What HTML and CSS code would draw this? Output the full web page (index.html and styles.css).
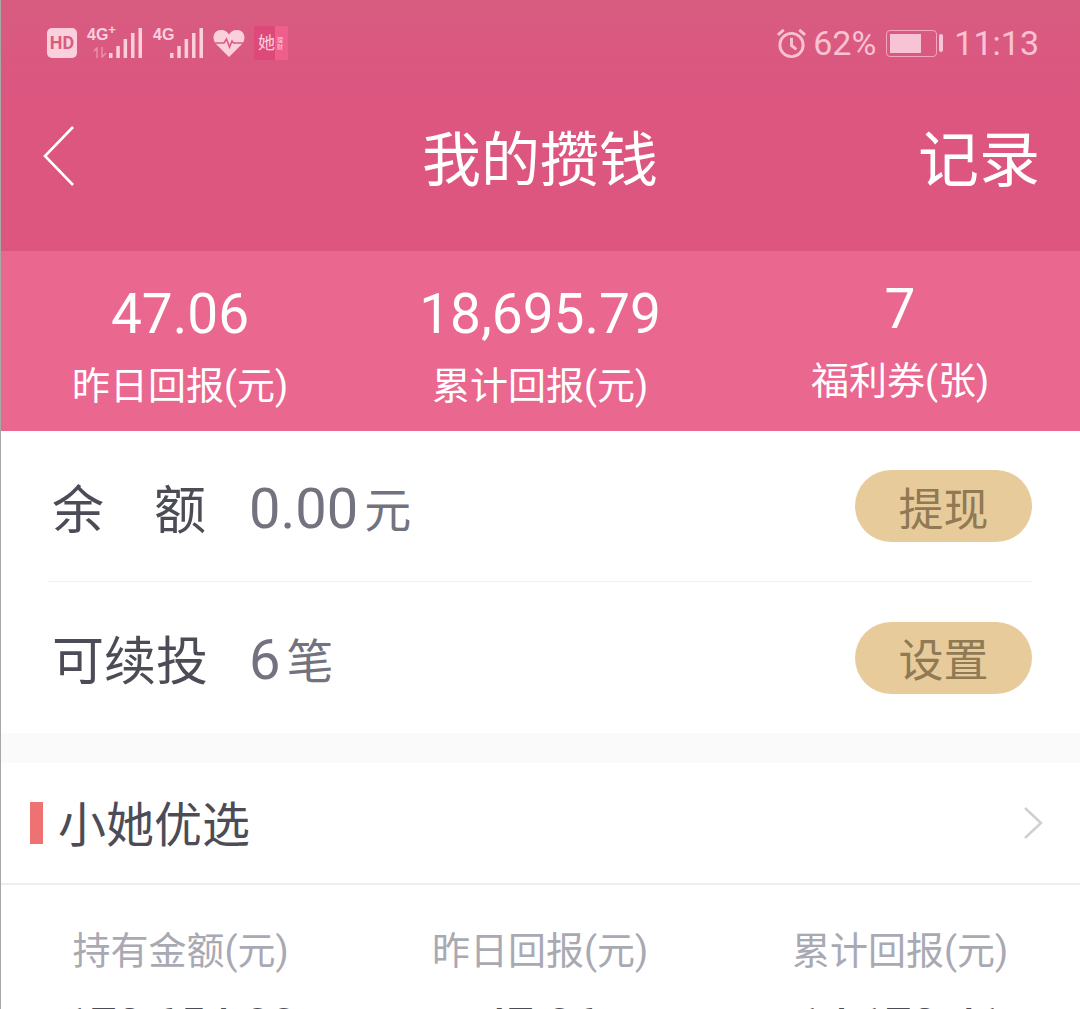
FILE: index.html
```html
<!DOCTYPE html>
<html lang="zh-CN">

<head>
    <meta charset="UTF-8">
    <meta name="viewport" content="width=device-width, initial-scale=1.0">
    <title>我的攒钱</title>
    <link rel="stylesheet" href="styles.css">
</head>

<body>
    <div class="page">
        <header class="header">
            <div class="status-bar">
                <div class="status-left">
                    <span class="hd-badge">HD</span>
                    <span class="signal signal-first">
                        <span class="net-label">4G<sup>+</sup></span>
                        <svg class="updown" width="15" height="11" viewBox="0 0 15 11" fill="none" stroke="#ec8fab" stroke-width="1.500">
                            <path d="M1 4 L4 1 V11"></path>
                            <path d="M9 0 V10 L13 6"></path>
                        </svg>
                        <svg class="bars" width="33" height="30" viewBox="0 0 33 30">
                            <rect x="0" y="25" width="3.500" height="5"></rect>
                            <rect x="7.300" y="18" width="3.500" height="12"></rect>
                            <rect x="14.600" y="11" width="3.500" height="19"></rect>
                            <rect x="22" y="5" width="3.500" height="25"></rect>
                            <rect x="29.500" y="0" width="3.500" height="30"></rect>
                        </svg>
                    </span>
                    <span class="signal signal-second">
                        <span class="net-label">4G</span>
                        <svg class="bars" width="33" height="30" viewBox="0 0 33 30">
                            <rect x="0" y="25" width="3.500" height="5"></rect>
                            <rect x="7.300" y="18" width="3.500" height="12"></rect>
                            <rect x="14.600" y="11" width="3.500" height="19"></rect>
                            <rect x="22" y="5" width="3.500" height="25"></rect>
                            <rect x="29.500" y="0" width="3.500" height="30"></rect>
                        </svg>
                    </span>
                    <svg class="heart" width="32" height="28" viewBox="0 0 32 28">
                        <path d="M16 28 L3 15 C-2 9 1 1 8 1 C12 1 14.500 3 16 5.500 C17.500 3 20 1 24 1 C31 1 34 9 29 15 Z" fill="#fbd0dc"></path>
                        <path d="M2 14 H11 L13.500 10 L16.500 18 L19 12 L20.500 14 H30" fill="none" stroke="#d85c80" stroke-width="1.600"></path>
                    </svg>
                    <span class="app-badge"><span class="app-main">她</span><span class="app-side">理财</span></span>
                </div>
                <div class="status-right">
                    <svg class="alarm" width="31" height="31" viewBox="0 0 32 32" fill="none" stroke="#f8c2d2" stroke-width="3">
                        <circle cx="16" cy="17.500" r="12"></circle>
                        <path d="M16 10 V18 L21 22"></path>
                        <path d="M2 7 L8 2"></path>
                        <path d="M30 7 L24 2"></path>
                    </svg>
                    <span class="status-text percent">62%</span>
                    <span class="battery"><span class="battery-level"></span></span>
                    <span class="battery-tip"></span>
                    <span class="status-text clock">11:13</span>
                </div>
            </div>
            <nav class="nav">
                <svg class="back" width="34" height="62" viewBox="0 0 34 62" fill="none" stroke="#fff" stroke-width="2.600">
                    <path d="M31 2 L3 31 L31 60"></path>
                </svg>
                <h1 class="nav-title">我的攒钱</h1>
                <a class="nav-link">记录</a>
            </nav>
        </header>

        <section class="stats">
            <div class="stat">
                <div class="stat-value">47.06</div>
                <div class="stat-label">昨日回报(元)</div>
            </div>
            <div class="stat">
                <div class="stat-value">18,695.79</div>
                <div class="stat-label">累计回报(元)</div>
            </div>
            <div class="stat stat-raised">
                <div class="stat-value">7</div>
                <div class="stat-label">福利券(张)</div>
            </div>
        </section>

        <section class="account">
            <div class="account-row">
                <span class="row-name">余<span class="row-gap"></span>额</span>
                <span class="row-num">0.00</span>
                <span class="row-unit">元</span>
                <button class="pill">提现</button>
            </div>
            <div class="account-row">
                <span class="row-name">可续投</span>
                <span class="row-num">6</span>
                <span class="row-unit">笔</span>
                <button class="pill">设置</button>
            </div>
        </section>

        <section class="product">
            <div class="product-head">
                <span class="accent"></span>
                <span class="product-title">小她优选</span>
                <svg class="more" width="20" height="34" viewBox="0 0 20 34" fill="none" stroke="#cfcfd4" stroke-width="2.500">
                    <path d="M2 2 L18 17 L2 32"></path>
                </svg>
            </div>
            <div class="product-table">
                <div class="cell">
                    <div class="cell-label">持有金额(元)</div>
                    <div class="cell-value">173,654.00</div>
                </div>
                <div class="cell">
                    <div class="cell-label">昨日回报(元)</div>
                    <div class="cell-value">47.06</div>
                </div>
                <div class="cell">
                    <div class="cell-label">累计回报(元)</div>
                    <div class="cell-value">14,173.41</div>
                </div>
            </div>
        </section>
    </div>
</body>

</html>
```

FILE: styles.css
```css
* {
    box-sizing: border-box;
}

html,
body {
    margin: 0;
    padding: 0;
    background-color: #fff;
}

.page {
    width: 1080px;
    height: 1009px;
    overflow: hidden;
    font-family: "Roboto", "Noto Sans CJK SC", sans-serif;
    border-left: 1px solid #a8a8a8;
}

.header {
    height: 251px;
    margin-left: -1px;
    border-left: 1px solid #a84a68;
    background: linear-gradient(#d85c80 0, #dc5680 100px, #dc5680 100%);
}

.status-bar {
    height: 86px;
    display: flex;
    align-items: center;
    justify-content: space-between;
    padding: 0 41px 0 46px;
}

.status-left,
.status-right {
    display: flex;
    align-items: center;
}

.hd-badge {
    width: 30px;
    height: 30px;
    border-radius: 5px;
    background-color: #fbd0dc;
    color: #d85c80;
    font-size: 18px;
    font-weight: 700;
    line-height: 30px;
    text-align: center;
}

.signal {
    display: flex;
    position: relative;
    justify-content: flex-end;
    align-items: flex-end;
    height: 30px;
}

.signal-first {
    width: 65px;
}

.signal-second {
    width: 61px;
}

.net-label {
    position: absolute;
    top: 0;
    left: 10px;
    font-family: "Liberation Sans Narrow", "Liberation Sans", sans-serif;
    font-size: 16px;
    font-weight: 700;
    line-height: 14px;
    color: #fbd0dc;
}

.signal-second .net-label {
    left: 11px;
}

.net-label sup {
    font-size: 13px;
    line-height: 0;
}

.updown {
    position: absolute;
    left: 16px;
    bottom: 0;
}

.bars rect {
    fill: #fbd0dc;
}

.heart {
    margin-left: 10px;
}

.app-badge {
    display: flex;
    width: 34px;
    height: 34px;
    margin-left: 9px;
    background-color: #ee5f8c;
    color: #fbd0dc;
}

.app-main {
    width: 21px;
    background-color: #dd4a7a;
    font-size: 17px;
    line-height: 34px;
    text-align: right;
}

.app-side {
    flex: 1;
    font-size: 6px;
    line-height: 7px;
    padding: 10px 0 0 2px;
}

.alarm {
    margin-right: 6px;
}

.status-text {
    color: #f8c2d2;
    font-size: 34px;
    line-height: 40px;
}

.percent {
    margin-right: 10px;
}

.battery {
    width: 51px;
    height: 27px;
    padding: 3px;
    border: 1.500px solid #f4a6be;
    border-radius: 4px;
}

.battery-level {
    display: block;
    width: 31px;
    height: 100%;
    background-color: #f6c4d4;
}

.battery-tip {
    width: 4px;
    height: 18px;
    margin: 0 11px 0 2px;
    border-radius: 2px;
    background-color: #f6c4d4;
}

.nav {
    height: 165px;
    display: flex;
    align-items: center;
    justify-content: space-between;
    padding: 0 40px 26px 41px;
    position: relative;
    color: #fff;
}

.nav-title {
    margin: 0;
    position: absolute;
    left: 421px;
    font-size: 59px;
    font-weight: 400;
}

.nav-link {
    font-size: 61px;
}

.stats {
    height: 180px;
    margin-left: -1px;
    display: grid;
    grid-template-columns: 360px 360px 360px;
    background-color: #ea678f;
    color: #fff;
    text-align: center;
}

.stat {
    padding-top: 31px;
}

.stat-raised {
    padding-top: 26px;
}

.stat-value {
    font-size: 55px;
    line-height: 64px;
}

.stat-label {
    font-size: 38px;
    line-height: 44px;
    margin-top: 18px;
}

.account-row {
    height: 151px;
    margin: 0 48px 0 47px;
    display: flex;
    align-items: center;
    color: #4a4a55;
}

.account-row:first-child {
    border-bottom: 1px solid #f1f1f1;
}

.row-name {
    width: 201px;
    padding-left: 4px;
    font-size: 52px;
    color: #4c4c57;
}

.row-gap {
    display: inline-block;
    width: 50px;
}

.row-num {
    padding-top: 5px;
    color: #73737f;
    font-size: 56px;
}

.row-unit {
    flex: 1;
    margin-left: 6px;
    color: #73737f;
    font-size: 47px;
}

.pill {
    width: 177px;
    height: 72px;
    border: none;
    border-radius: 36px;
    background-color: #e7cb9b;
    color: #8f7a55;
    font-family: inherit;
    font-size: 45px;
    padding: 0;
}

.product {
    margin-top: 30px;
    box-shadow: 0 -30px 0 #fafafa;
    background-color: #fff;
}

.product-head {
    height: 122px;
    display: flex;
    align-items: center;
    padding: 0 37px 0 29px;
    border-bottom: 2px solid #eeeeee;
}

.accent {
    width: 13px;
    height: 42px;
    background-color: #ee7272;
}

.product-title {
    flex: 1;
    margin: 0 0 4px 15px;
    font-size: 48px;
    color: #4c4c57;
}

.product-table {
    display: grid;
    grid-template-columns: 359px 360px 360px;
    text-align: center;
}

.cell {
    padding-top: 41px;
}

.cell-label {
    color: #a9a9b3;
    font-size: 38px;
    line-height: 50px;
}

.cell-value {
    color: #4c4c57;
    font-size: 47px;
    line-height: 50px;
    margin-top: 24px;
}
```
